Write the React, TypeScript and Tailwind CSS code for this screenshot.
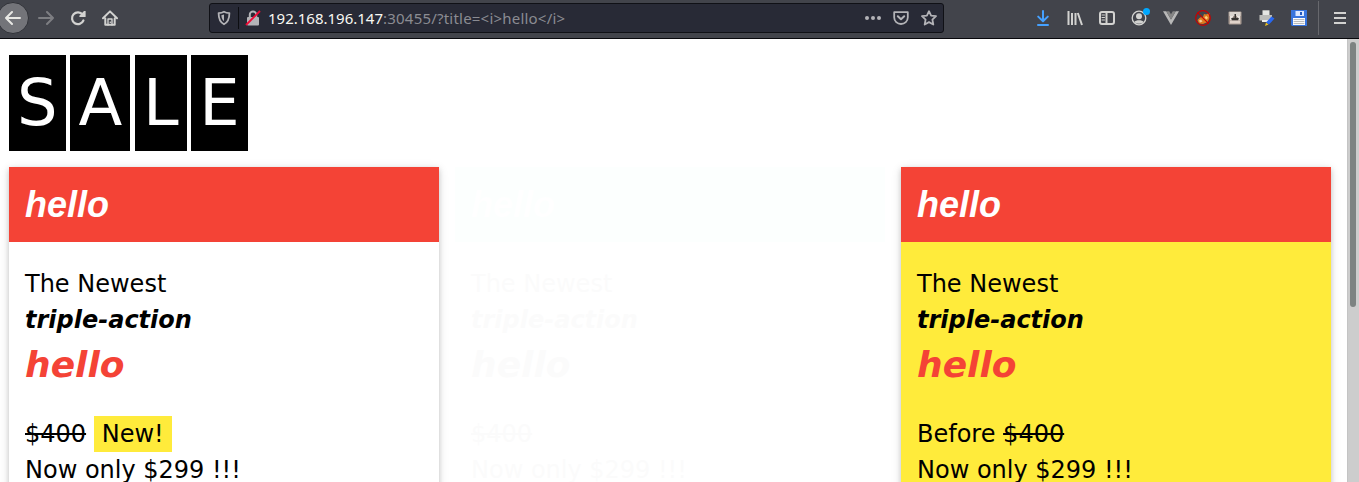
import React from "react";

const stroke = { fill: "none", stroke: "currentColor", strokeWidth: 2, strokeLinecap: "round", strokeLinejoin: "round" } as const;

function Icon({ children, className = "", color = "text-[#d2d2d0]" }: { children: React.ReactNode; className?: string; color?: string }) {
  return (
    <svg viewBox="0 0 16 16" className={`size-4 shrink-0 ${color} ${className}`} {...stroke}>
      {children}
    </svg>
  );
}

function Toolbar() {
  return (
    <div className="flex h-[39px] w-full shrink-0 border-b border-[#08080c] bg-[#42444b] font-['Noto_Sans',sans-serif]">
      <div className="flex w-[209px] items-start">
        <div className="-ml-[3px] mt-[2px] flex size-8 shrink-0 items-center justify-center rounded-full border border-[#303238] bg-[#737479]">
          <Icon color="text-[#e8e8e4]"><path d="M1 8H15M7 2L1 8L7 14" /></Icon>
        </div>
        <Icon className="mt-[10px] ml-[9px]" color="text-[#7d7e82]"><path d="M1 8H15M9 2L15 8L9 14" /></Icon>
        <Icon className="mt-[10px] ml-4">
          <path d="M13.4 10.5A5.9 5.9 0 1 1 12.6 4.6" strokeWidth="2.2" />
          <path d="M15.6 1V7H9.4V5.8L14 1Z" fill="currentColor" stroke="none" />
        </Icon>
        <Icon className="mt-[10px] ml-4">
          <path d="M1 8.2L8 1.4L15 8.2M3.3 8.5V14.8H12.7V8.5" />
          <path d="M6 15V9H10V15M8.2 12.3H8.4" strokeWidth="1.4" />
        </Icon>
      </div>
      <div className="mt-[3px] flex h-[30px] w-[735px] items-center rounded-[3px] border border-[#101116] bg-[#282a36]">
        <Icon className="ml-[6px]" color="text-[#b3b3b7]">
          <path d="M8 1.7C9.8 2.7 11.6 3 13.4 3.1C13.4 8 12.8 12 8 14.3C3.2 12 2.6 8 2.6 3.1C4.4 3 6.2 2.7 8 1.7Z" strokeWidth="1.8" />
          <path d="M8 4.6V11.3C6 9.7 5.5 7.8 5.4 5.3Z" fill="currentColor" stroke="none" />
        </Icon>
        <div className="ml-[6px] h-[22px] w-px bg-[#0d0e12]" />
        <Icon className="ml-[6px]" color="text-[#b3b3b7]">
          <rect x="2" y="7" width="12" height="8.5" rx="1" fill="currentColor" stroke="none" />
          <path d="M4.8 7V4.6A3.2 3.2 0 0 1 11.2 4.6V7" />
          <path d="M1 15L15 1" stroke="#ef0936" strokeWidth="1.9" strokeLinecap="butt" />
        </Icon>
        <div className="ml-[7px] w-[585px] text-[15px] leading-5 whitespace-nowrap text-[#8b8c92]">
          <span className="text-[#f8f8f2]">192.168.196.147</span>
          <span className="tracking-[0.21px]">{":30455/?title=<i>hello</i>"}</span>
        </div>
        <Icon className="ml-3" color="text-[#b3b3b7]">
          <g fill="currentColor" stroke="none"><circle cx="2" cy="8" r="2" /><circle cx="8" cy="8" r="2" /><circle cx="14" cy="8" r="2" /></g>
        </Icon>
        <Icon className="ml-3" color="text-[#b3b3b7]">
          <path d="M1.2 2.2H14.8V7.5A6.8 6.5 0 0 1 1.2 7.5Z" strokeWidth="1.8" />
          <path d="M4.8 6.3L8 9.3L11.2 6.3" />
        </Icon>
        <Icon className="ml-3" color="text-[#b3b3b7]">
          <path d="M8 1.2L10.1 5.6L15 6.2L11.4 9.6L12.3 14.5L8 12.1L3.7 14.5L4.6 9.6L1 6.2L5.9 5.6Z" strokeWidth="1.8" />
        </Icon>
      </div>
      <div className="flex h-9 flex-1 items-center justify-end">
        <Icon color="text-[#45a1ff]"><path d="M8 1V11M3.2 6.6L8 11.3L12.8 6.6M3 15H13" /></Icon>
        <Icon className="ml-4"><path d="M1.5 1V15M5 3V15M8.5 3V15M10.8 3L15 15" strokeLinecap="butt" /></Icon>
        <Icon className="ml-4">
          <rect x="1" y="2" width="14" height="12" rx="2" /><path d="M7.5 2V14" /><path d="M3 5H5.5M3 7.5H5.5M3 10H5.5" strokeWidth="1" />
        </Icon>
        <div className="relative ml-4">
          <Icon><circle cx="8" cy="8" r="6.8" strokeWidth="1.3" /><circle cx="8" cy="6.2" r="3" fill="currentColor" stroke="none" /><path d="M3.3 12C4.5 9.5 11.5 9.5 12.7 12C10.5 14.3 5.5 14.3 3.3 12Z" fill="currentColor" stroke="none" /></Icon>
          <div className="absolute -top-[2px] -right-[3px] size-[7px] rounded-full bg-[#00a8ff]" />
        </div>
        <Icon className="ml-4">
          <g stroke="none"><path d="M0 1.2H3.2L8 9.6L12.8 1.2H16L8 15Z" fill="#b8b8b8" /><path d="M3.2 1.2H6.2L8 4.3L9.8 1.2H12.8L8 9.6Z" fill="#858585" /></g>
        </Icon>
        <Icon className="ml-4">
          <g stroke="none">
            <path d="M2.5 10L5 7.5L8 7L9 4L11 4.5L14.5 3L14.5 8L12.5 12L8 14L4 13.5Z" fill="#df7b20" />
            <path d="M4 10.5L6 9.5L7.5 11.5L5 12.5Z" fill="#f6cf9c" />
            <path d="M9.5 7L11.5 6L13 8L11 9.5Z" fill="#ffd080" />
          </g>
          <circle cx="8" cy="8" r="7.3" stroke="#c80000" strokeWidth="1.2" /><path d="M2.8 2.8L13.2 13.2" stroke="#c80000" strokeWidth="1.2" />
        </Icon>
        <Icon className="ml-4">
          <g stroke="none">
            <rect x="1.5" y="1.5" width="13" height="13" rx="1" fill="#a99b93" />
            <path d="M2.5 2H13.5V6H2.5Z" fill="#d9d4cf" />
            <path d="M3 10.5H13V13.5H3Z" fill="#e0d3ca" />
            <path d="M3 6H6V10H3ZM10 6H13V10H10Z" fill="#e8e4df" />
            <path d="M4 8.5L6 7.5L7.5 8V4L9 4V8L10.5 7.5L12 8.5L11 10.3H5Z" fill="#353331" />
          </g>
        </Icon>
        <Icon className="ml-4">
          <g stroke="none"><path d="M3.5 0.3H10.5V5H3.5Z" fill="#e5e5e3" /><path d="M0.5 5H13V10.5H0.5Z" fill="#bcbcba" /><path d="M3 10H9V12H3Z" fill="#eeeeeb" /><path d="M12.5 6.5L15.5 8.5L10 14.5L7 12.5Z" fill="#2868f0" /><path d="M7 12.5L9.5 14.5L6 16Z" fill="#efc31c" /></g>
        </Icon>
        <Icon className="ml-4">
          <g stroke="none"><path d="M0 0H16V16H1L0 15Z" fill="#3874dc" /><path d="M4.5 1H13V6H4.5Z" fill="#dce8ff" /><path d="M9 2H11V5H9Z" fill="#245ac0" /><path d="M2 8H14V15H2Z" fill="#fff" /></g>
          <path d="M3 9.6H13M3 11.6H13M3 13.6H13" stroke="#a0a0a0" strokeWidth="0.8" />
        </Icon>
        <div className="ml-[11px] h-[34px] w-px bg-[#67686d]" />
        <Icon className="ml-[13px] mr-[11px]"><path d="M2 3H14M2 8H14M2 13H14" strokeLinecap="butt" /></Icon>
      </div>
    </div>
  );
}

function Card({ yellow = false, before = false, tag = false, faded = false }: { yellow?: boolean; before?: boolean; tag?: boolean; faded?: boolean }) {
  return (
    <div className={`h-[500px] w-[430px] shrink-0 ${yellow ? "bg-[#ffeb3b]" : "bg-white"} ${faded ? "opacity-[0.01]" : "shadow-[0_2px_5px_0_rgba(0,0,0,0.16),0_2px_10px_0_rgba(0,0,0,0.12)]"}`}>
      <div className={`h-[75px] px-4 pt-[11px] ${faded ? "bg-[#40ffd0]" : "bg-[#f44336]"}`}>
        <h1 className="font-['Liberation_Sans',sans-serif] text-[36px] leading-[54px] font-bold text-white italic">hello</h1>
      </div>
      <div className="px-4 pt-6 text-2xl leading-9 text-black">
        <p>The Newest</p>
        <p className="font-bold italic">triple-action</p>
        <p className={`text-[36px] leading-[54px] font-bold italic ${faded ? "text-black" : "text-[#f44336]"}`}>hello</p>
        <p className="mt-6 whitespace-pre">
          {before && "Before "}<span className="line-through">$400</span>
          {tag && <> <span className="inline-block bg-[#ffeb3b] px-2">New!</span></>}
        </p>
        <p>Now only $299 !!!</p>
      </div>
    </div>
  );
}

export default function App() {
  return (
    <div className="flex h-[482px] w-[1359px] flex-col overflow-hidden bg-white">
      <Toolbar />
      <div className="flex min-h-0 flex-1">
        <main className="flex-1 overflow-hidden pt-4 pl-[9px] font-['DejaVu_Sans',sans-serif]">
          <div className="flex gap-[4.77px] text-[64px] leading-[96px] text-white">
            {["S", "A", "L", "E"].map((c) => <span key={c} className="bg-black px-2">{c}</span>)}
          </div>
          <div className="mt-4 flex gap-4">
            <Card tag />
            <Card faded />
            <Card yellow before />
          </div>
        </main>
        <div className="w-3 shrink-0 border-l border-[#c4c4c4] bg-[#cdcdcd] pt-[3px] pl-[2px]">
          <div className="h-[265px] w-[6px] rounded-full bg-[#7d8382]" />
        </div>
      </div>
    </div>
  );
}
